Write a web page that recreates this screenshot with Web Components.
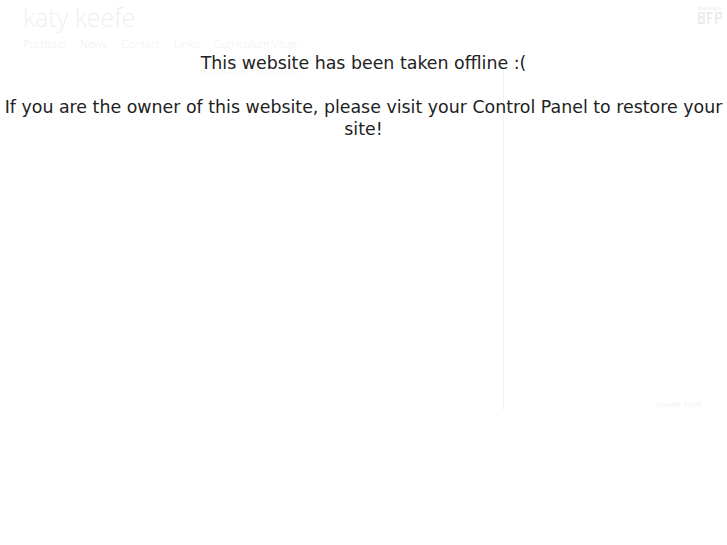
<!DOCTYPE html>
<html>
<head>
<meta charset="utf-8">
<title>katy keefe</title>
<style>
    html, body { margin: 0; height: 100%; background: #fff; }
    body { position: relative; overflow: hidden; }
</style>
</head>
<body>
<ghost-site>
    <span slot="name">katy keefe</span>
    <a slot="nav">Portfolio</a>
    <a slot="nav">News</a>
    <a slot="nav">Contact</a>
    <a slot="nav">Links</a>
    <a slot="nav">Curriculum Vitae</a>
</ghost-site>
<offline-notice></offline-notice>

<script>
class GhostSite extends HTMLElement {
    constructor() {
        super();
        this.attachShadow({ mode: 'open' });
    }

    connectedCallback() {
        this.shadowRoot.innerHTML = `
            <style>
                :host {
                    display: grid;
                    grid-template-columns: 503px 1fr;
                    width: 727px;
                    height: 410px;
                    font-family: "Open Sans", "Noto Sans", sans-serif;
                    font-weight: 300;
                    color: #efefef;
                }

                .main {
                    padding: 2px 0 0 23px;
                }

                .name {
                    font-size: 25px;
                    line-height: 30px;
                }

                nav {
                    display: flex;
                    gap: 14px;
                    margin-top: 4px;
                    font-size: 11.2px;
                    line-height: 16px;
                }

                ::slotted(a) {
                    color: #efefef;
                }

                .loading {
                    margin: 9px 0 0 180px;
                    font-size: 12.5px;
                    line-height: 18px;
                    color: #f5f5f5;
                }

                aside {
                    display: flex;
                    flex-direction: column;
                    padding-top: 5px;
                }

                .logo {
                    display: flex;
                    flex-direction: column;
                    align-self: flex-end;
                    gap: 1px;
                    width: 24px;
                    margin-right: 5px;
                }

                .logo span {
                    font-family: "DejaVu Sans", sans-serif;
                    font-weight: 700;
                    font-size: 5px;
                    line-height: 6px;
                    letter-spacing: 0.9px;
                    color: #eeeeee;
                    white-space: nowrap;
                }

                .logo svg {
                    display: block;
                    width: 24px;
                    height: 12px;
                }

                .panel {
                    flex: 1;
                    display: flex;
                    justify-content: flex-end;
                    align-items: flex-end;
                    margin-top: 44px;
                    border-left: 1px solid #f2f2f2;
                }

                .share {
                    margin-right: 26px;
                    font-family: "Liberation Sans", sans-serif;
                    font-weight: 400;
                    font-size: 7px;
                    line-height: 10px;
                    letter-spacing: 0.3px;
                    color: #eff1f1;
                }
            </style>
            <div class="main">
                <div class="name"><slot name="name"></slot></div>
                <nav><slot name="nav"></slot></nav>
                <div class="loading">Loading Artwork...</div>
            </div>
            <aside>
                <div class="logo">
                    <span>design</span>
                    <svg viewBox="0 0 24 12" fill="#ededed">
                        <path fill-rule="evenodd" d="M0 0h7v12H0zM2 2v2h3V2zM2 7v3h3V7z"/>
                        <path d="M9 0h6v2h-4v3h3v2h-3v5H9z"/>
                        <path fill-rule="evenodd" d="M17 0h7v7h-5v5h-2zM19 2v3h3V2z"/>
                    </svg>
                </div>
                <div class="panel">
                    <div class="share">SHARE THIS</div>
                </div>
            </aside>
        `;
    }
}

class OfflineNotice extends HTMLElement {
    constructor() {
        super();
        this.attachShadow({ mode: 'open' });
    }

    connectedCallback() {
        this.shadowRoot.innerHTML = `
            <style>
                :host {
                    display: block;
                    position: absolute;
                    top: 52px;
                    left: 0;
                    width: 727px;
                    font-family: "DejaVu Sans", sans-serif;
                    font-size: 17.4px;
                    line-height: 22px;
                    text-align: center;
                    color: #222;
                }

                p { margin: 0 0 22px; }
            </style>
            <p>This website has been taken offline :(</p>
            <p>If you are the owner of this website, please visit your Control Panel to restore your site!</p>
        `;
    }
}

customElements.define('ghost-site', GhostSite);
customElements.define('offline-notice', OfflineNotice);
</script>
</body>
</html>
